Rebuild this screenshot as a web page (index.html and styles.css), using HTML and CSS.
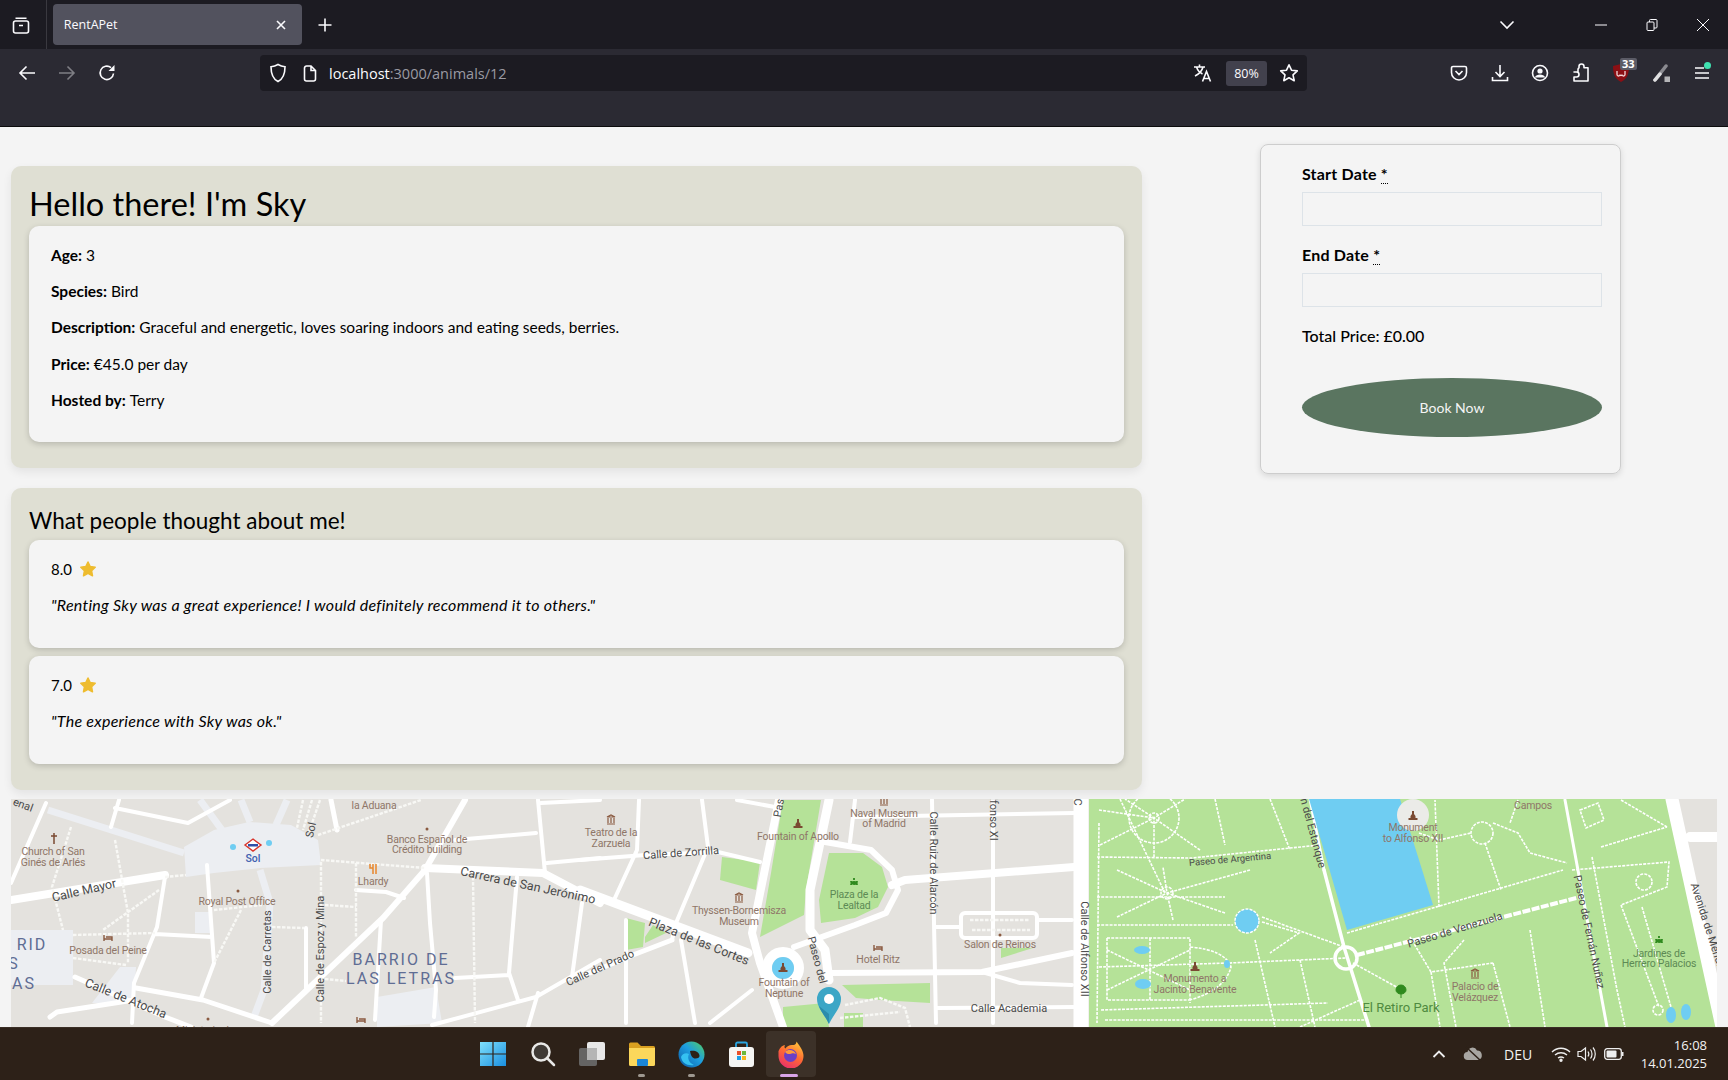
FILE: index.html
```html
<!DOCTYPE html>
<html lang="en">
<head>
    <meta charset="UTF-8">
    <title>RentAPet</title>
    <link rel="stylesheet" href="styles.css">
</head>
<body>

<!-- browser tabs -->
<div class="tab-row">
    <div class="tab-view">
        <svg width="20" height="20" viewBox="0 0 20 20" class="ico"><rect x="2.5" y="6" width="15" height="12" rx="2"/><path d="M4.5 3.2h11M8 10.5h4"/></svg>
    </div>
    <div class="tab">
        <span>RentAPet</span>
        <svg width="12" height="12" viewBox="0 0 12 12" class="ico"><path d="M2 2l8 8M10 2l-8 8"/></svg>
    </div>
    <svg width="16" height="16" viewBox="0 0 16 16" class="ico new-tab"><path d="M8 1.5v13M1.5 8h13"/></svg>
    <svg width="18" height="12" viewBox="0 0 18 12" class="ico tab-list"><path d="M2.5 2.5L9 9l6.5-6.5"/></svg>
    <div class="win-btn"><svg width="12" height="12" viewBox="0 0 12 12" class="ico thin"><path d="M0 6h12"/></svg></div>
    <div class="win-btn"><svg width="12" height="12" viewBox="0 0 12 12" class="ico thin"><rect x="1" y="3" width="7" height="8.5" rx="1"/><path d="M3.5 3V1.5a1 1 0 0 1 1-1h5.500a1 1 0 0 1 1 1V8a1 1 0 0 1-1 1H8"/></svg></div>
    <div class="win-btn"><svg width="14" height="14" viewBox="0 0 14 14" class="ico thin"><path d="M1 1l12 12M13 1L1 13"/></svg></div>
</div>

<!-- browser toolbar -->
<div class="toolbar">
    <div class="nav-btn"><svg width="18" height="18" viewBox="0 0 18 18" class="ico"><path d="M17 9H2M8.500 2.500L2 9l6.500 6.500"/></svg></div>
    <div class="nav-btn off"><svg width="18" height="18" viewBox="0 0 18 18" class="ico"><path d="M1 9h15M9.500 2.500L16 9l-6.500 6.500"/></svg></div>
    <div class="nav-btn"><svg width="18" height="18" viewBox="0 0 18 18" class="ico"><path d="M15.500 9.500A6.700 6.700 0 1 1 13 3.600"/><path class="solid" d="M16.500 1v6h-6z"/></svg></div>
    <div class="url-bar">
        <svg width="18" height="20" viewBox="0 0 18 20" class="ico shield"><path d="M9 1.500c2.500 1.500 4.500 2 7 2.200 0 7-1.500 12-7 14.800C3.500 15.700 2 10.700 2 3.700c2.500-.2 4.500-.7 7-2.200z"/></svg>
        <svg width="14" height="17" viewBox="0 0 14 17" class="ico page-ico"><path d="M1.500 3a2 2 0 0 1 2-2h4.500l4.500 4.500V14a2 2 0 0 1-2 2h-7a2 2 0 0 1-2-2zM8 1v4.500h4.500"/></svg>
        <span class="url-text">localhost<span class="url-dim">:3000/animals/12</span></span>
        <svg width="20" height="20" viewBox="0 0 20 20" class="ico translate"><path d="M1 4h11M6.500 1.500V4M10 4c-1 4-4 7-8 9M3.500 4c1 3 3 5.500 6 7"/><path d="M9.500 18.500l4-10 4 10M11 15.500h5"/></svg>
        <span class="zoom-level">80%</span>
        <svg width="20" height="20" viewBox="0 0 20 20" class="ico star-ico"><path d="M10 1.800l2.500 5.400 5.800.7-4.300 4 1.200 5.800-5.200-2.900-5.200 2.900 1.200-5.800-4.300-4 5.800-.7z" stroke-linejoin="round"/></svg>
    </div>
    <div class="tool-icons">
        <div class="tool"><svg width="18" height="18" viewBox="0 0 18 18" class="ico"><path d="M3 2.500h12a1.500 1.500 0 0 1 1.500 1.500v4.500a7.500 7.500 0 0 1-15 0V4A1.500 1.500 0 0 1 3 2.500zM5.500 7L9 10.500 12.500 7"/></svg></div>
        <div class="tool"><svg width="18" height="18" viewBox="0 0 18 18" class="ico"><path d="M9 1v11M4.500 8L9 12.500 13.500 8M1.500 13v3.500h15V13"/></svg></div>
        <div class="tool"><svg width="18" height="18" viewBox="0 0 18 18" class="ico"><circle cx="9" cy="9" r="7.500"/><circle class="solid" cx="9" cy="7" r="2.600"/><path class="solid" d="M3.800 13.500c1-2.300 3-3 5.200-3s4.200.7 5.200 3z"/></svg></div>
        <div class="tool"><svg width="18" height="20" viewBox="0 0 18 20" class="ico"><path d="M2 9h4V6.500a2 2 0 0 1 1-1.700V3.500a2.500 2.500 0 0 1 5 0v1.300H16V18H2v-4h2.500a2.500 2.500 0 0 0 0-5z" stroke-linejoin="round"/></svg></div>
        <div class="tool">
            <svg width="18" height="20" viewBox="0 0 18 20"><path d="M9 1l8 2c0 8-2 13-8 16C3 16 1 11 1 3z" fill="#8b0f14"/><path d="M5 8v3.500a1.500 1.500 0 0 0 3 0 1 1 0 0 0 2 0 1.500 1.500 0 0 0 3 0V8" fill="none" stroke="#f2d8d8" stroke-width="1.300"/></svg>
            <span class="ublock-count">33</span>
        </div>
        <div class="tool"><svg width="18" height="20" viewBox="0 0 18 20"><path d="M2 17L13 3" stroke="#8a8a90" stroke-width="3.500" stroke-linecap="round"/><path d="M2 17l5-6" stroke="#e0e0e2" stroke-width="3.500" stroke-linecap="round"/><rect x="11.500" y="13.500" width="5.500" height="5.500" fill="#b5b5b8"/></svg></div>
        <div class="tool">
            <svg width="16" height="14" viewBox="0 0 16 14" class="ico"><path d="M1 2h9M1 7h14M1 12h14"/></svg>
            <span class="update-dot"></span>
        </div>
    </div>
</div>

<!-- page content -->
<div class="page">
    <div class="top-row">
        <div class="left-col">
            <div class="panel">
                <h1>Hello there! I'm Sky</h1>
                <div class="inner info">
                    <p><b>Age:</b> 3</p>
                    <p><b>Species:</b> Bird</p>
                    <p><b>Description:</b> Graceful and energetic, loves soaring indoors and eating seeds, berries.</p>
                    <p><b>Price:</b> €45.0 per day</p>
                    <p><b>Hosted by:</b> Terry</p>
                </div>
            </div>
            <div class="panel reviews">
                <h2>What people thought about me!</h2>
                <div class="inner review">
                    <p class="rating">8.0 <svg width="18" height="18" viewBox="0 0 18 18" class="rate-star"><path d="M9 2l2.200 4.600 5 .7-3.600 3.500.9 5L9 13.400l-4.500 2.400.9-5L1.800 7.300l5-.7z"/></svg></p>
                    <p class="comment">"Renting Sky was a great experience! I would definitely recommend it to others."</p>
                </div>
                <div class="inner review">
                    <p class="rating">7.0 <svg width="18" height="18" viewBox="0 0 18 18" class="rate-star"><path d="M9 2l2.200 4.600 5 .7-3.600 3.500.9 5L9 13.400l-4.500 2.400.9-5L1.800 7.300l5-.7z"/></svg></p>
                    <p class="comment">"The experience with Sky was ok."</p>
                </div>
            </div>
        </div>
        <div class="booking">
            <label for="startDate">Start Date <abbr>*</abbr></label>
            <input id="startDate" type="text">
            <label for="endDate">End Date <abbr>*</abbr></label>
            <input id="endDate" type="text">
            <p class="total">Total Price: <span>£0.00</span></p>
            <button type="button">Book Now</button>
        </div>
    </div>

    <div class="map">
        <svg width="1706" height="228" viewBox="11 799 1706 228">
            <defs>
                <g id="mon"><path d="M-1 -5h2v3l1.500 2v2h2v2h-9V2h2V0L-1 -2z" fill="#7a4a32"/></g>
                <g id="bed"><path d="M-4 -3v6M-4 1H4v2M-2 -1h6v2" fill="none" stroke="#8a5a40" stroke-width="1.400"/></g>
                <g id="mus"><path d="M-4 -3L0 -5l4 2zM-4 4h8M-3 -2v5M0 -2v5M3 -2v5" fill="none" stroke="#8a5a40" stroke-width="1.200"/></g>
                <g id="gdn"><path d="M-3 -2a3 3 0 0 0 6 0M-3 2a3 3 0 0 1 6 0M0 -5v2" fill="none" stroke="#2f8a1e" stroke-width="1.800"/></g>
            </defs>

            <rect x="11" y="799" width="1706" height="228" fill="#e4e2de"/>

            <!-- pale squares and parks -->
            <g fill="#eceef2">
                <path d="M184 847L214 830 249 822 291 825 318 840 321 865 260 868 214 873 186 877z"/>
                <rect x="11" y="930" width="62" height="55"/>
                <path d="M195 912h17v21h-17zM120 967h16l-2 36H92zM377 997l59-10 6 36-65 4z"/>
            </g>
            <g fill="#b5e298">
                <path d="M783 800H821L806 890 804 915 760 937 771 873z"/>
                <path d="M829 853H863L882 867 888 887 878 907 855 918 821 923 819 900z"/>
                <path d="M722 857L760 862 756 890 720 880z"/>
                <path d="M626 918L645 923 643 947 626 950zM645 937L653 925 666 933 645 943z"/>
                <path d="M842 985L930 983V1003L880 1000 856 998zM783 1007L825 1003 829 1027H783zM844 1013H863V1027H844z"/>
                <path d="M1001 948H1033L1001 958z"/>
                <path d="M1089 799H1668L1716 1027H1089z"/>
            </g>

            <!-- pale wide streets -->
            <g fill="none" stroke="#eceef2" stroke-width="7" stroke-linejoin="round">
                <path d="M48 810L184 853M260 870L270 903 264 990 254 1017"/>
                <path d="M200 800L222 830M241 800L250 822M287 800L276 825"/>
            </g>

            <!-- streets -->
            <g fill="none" stroke="#fff" stroke-width="5" stroke-linejoin="round" stroke-linecap="round">
                <path d="M11 900L165 875" stroke-width="8"/>
                <path d="M46 803L11 883M119 800L111 827M115 808L188 823 230 800" stroke-width="4"/>
                <path d="M331 800L337 830"/>
                <path d="M465 800L425 870 383 918 272 1023" stroke-width="6"/>
                <path d="M425 868L543 873 600 903" stroke-width="8"/>
                <path d="M580 890L748 953" stroke-width="9"/>
                <path d="M207 865L214 963 201 998M165 877L157 927 134 983 132 1023M155 934L212 937" stroke-width="4"/>
                <path d="M136 988L203 1000 272 1023M75 977L165 1017 191 1027M50 1017L57 1012 134 1000" stroke-width="5"/>
                <path d="M356 890L386 892 404 898M306 928L306 990" stroke-width="4"/>
                <path d="M427 873L430 923 436 990 434 1017M381 920L375 1020" stroke-width="4"/>
                <path d="M517 877L509 973 518 1000M455 978L509 975M600 960L536 997 432 1025" stroke-width="4"/>
                <path d="M580 977L633 955 672 940" stroke-width="5"/>
                <path d="M538 800L545 873M541 803L600 800M547 863L600 858M455 840L536 833M582 903L572 977M538 993L528 1027" stroke-width="4"/>
                <path d="M779 800L752 933 760 963 783 1027" stroke-width="8"/>
                <path d="M829 800L810 890 810 930 825 950 829 980" stroke-width="9"/>
                <path d="M825 842L871 850 892 870 898 890 886 913 855 925 794 947" stroke-width="6"/>
                <path d="M892 885L905 880 1074 867" stroke-width="8"/>
                <path d="M855 800L850 842M854 817L1074 813M932 800L934 923 936 1023M993 800V1023" stroke-width="4"/>
                <path d="M1081 799V1027" stroke-width="15"/>
                <path d="M829 973L982 972 1072 953" stroke-width="6"/>
                <path d="M982 972L1020 983 1072 985M936 1008L1074 1007M936 927H959M1037 920H1072" stroke-width="4"/>
                <rect x="961" y="913" width="76" height="25" rx="4" stroke-width="4"/>
                <path d="M580 860L645 855 718 852 760 862M639 800L637 850 614 900M702 800L708 847 676 923 672 940M737 800L775 807" stroke-width="4"/>
                <path d="M626 920V1023M681 940L695 1023M752 990L710 1023" stroke-width="4"/>
                <circle cx="783" cy="968" r="16" stroke-width="10"/>
                <path d="M1672 799L1722 1027" stroke-width="13"/>
                <path d="M1690 837H1718" stroke-width="10"/>
                <path d="M1324 870L1344 947 1369 1027" stroke-width="3.500"/>
                <path d="M1310 799L1324 870" stroke-width="3"/>
                <path d="M1565 800L1607 1027" stroke-width="3"/>
                <circle cx="1346" cy="958" r="11" stroke-width="3.500"/>
            </g>
            <path d="M1357 955L1580 897" fill="none" stroke="#fff" stroke-width="4" stroke-dasharray="8 1.500"/>

            <!-- footpaths -->
            <g fill="none" stroke="#f8f8f5" stroke-width="2.400" stroke-dasharray="3.500 1.500">
                <path d="M71 827L52 887 63 930M115 840L128 913 128 963M159 890L103 930M73 935L155 933M73 958L126 965"/>
                <path d="M165 877L186 875M318 835L421 800M321 860L425 868M321 862V1023M356 863V937M325 905L356 907M214 910L262 905M241 910L214 963M272 927L304 928M325 979L346 981M473 877L475 1023"/>
                <path d="M303 800L297 828M312 800L303 830M320 800L309 832"/>
                <path d="M845 1005L880 998 905 1008 910 1027M840 1018L900 1012M970 920H1030M972 930H1030"/>
            </g>
            <g fill="none" stroke="#fff" stroke-width="1.600" stroke-dasharray="3 1.200">
                <circle cx="1154" cy="818" r="25"/><circle cx="1154" cy="818" r="5"/>
                <path d="M1099 810L1154 818 1125 799M1100 845L1154 818 1185 799M1200 850L1154 818V857M1120 799L1165 893M1215 799L1225 845M1270 799L1290 850"/>
                <path d="M1097 857L1192 858 1320 845M1099 823L1097 1023"/>
                <circle cx="1167" cy="893" r="6"/>
                <path d="M1117 870L1167 893 1225 913M1117 917L1167 893 1250 870M1097 897H1225M1173 920L1167 893 1163 867M1097 925H1233"/>
                <path d="M1262 917L1344 947M1262 922L1299 933 1270 953M1107 938H1190V1003M1107 938V1000H1190M1107 950L1190 990M1107 990L1190 950M1150 938V1000"/>
                <path d="M1099 967L1229 963 1346 958M1101 1010L1328 1003M1190 947Q1225 950 1231 967 1225 990 1190 1000M1255 940L1275 1027M1300 960L1315 1027"/>
                <path d="M1353 963L1402 990M1410 937L1431 972 1493 963M1464 940L1444 963 1456 1027M1347 933L1563 870M1439 907L1435 800"/>
                <path d="M1419 833L1439 840 1471 833M1493 823L1518 833 1530 853 1567 863M1485 843L1501 890M1518 800L1510 823"/>
                <circle cx="1482" cy="833" r="11"/>
                <path d="M1572 870L1669 862 1667 887 1621 905M1601 847L1667 827M1621 905L1659 1007M1642 907L1671 1007M1592 857L1617 990 1625 1027M1621 800L1667 827"/>
                <path d="M1580 810L1598 803 1604 820 1586 828z"/>
                <circle cx="1644" cy="882" r="8"/><circle cx="1658" cy="1010" r="5"/>
                <path d="M1431 972L1440 1027M1493 963L1510 1027M1530 930L1545 1027M1360 1000L1300 1027M1105 1020H1369"/>
            </g>

            <!-- water -->
            <g fill="#6fcdf2">
                <path d="M1309 799H1400L1433 905 1347 930z"/>
                <circle cx="1247" cy="921" r="12" stroke="#fff" stroke-width="1.400" stroke-dasharray="3 1.200"/>
                <ellipse cx="1142" cy="950" rx="8" ry="4"/><ellipse cx="1143" cy="984" rx="8" ry="5"/>
                <ellipse cx="1227" cy="964" rx="3" ry="4"/>
                <ellipse cx="1671" cy="1015" rx="5" ry="8"/><ellipse cx="1686" cy="1012" rx="5" ry="8"/>
                <ellipse cx="783" cy="968" rx="11" ry="11"/>
                <circle cx="233" cy="847" r="3"/><circle cx="269" cy="843" r="3"/>
            </g>
            <circle cx="1413" cy="815" r="16" fill="#ebebe8"/>

            <!-- poi icons -->
            <use href="#mon" x="798" y="824"/>
            <use href="#mon" x="783" y="968"/>
            <use href="#mon" x="1413" y="816"/>
            <use href="#mon" x="1195" y="967"/>
            <use href="#bed" x="108" y="938"/>
            <use href="#bed" x="878" y="948"/>
            <use href="#bed" x="361" y="1020"/>
            <use href="#mus" x="611" y="820"/>
            <use href="#mus" x="739" y="898"/>
            <use href="#mus" x="884" y="801"/>
            <use href="#mus" x="1475" y="974"/>
            <use href="#gdn" x="854" y="883"/>
            <use href="#gdn" x="1659" y="941"/>
            <path d="M54 833v11M51 836h6" fill="none" stroke="#7a4a32" stroke-width="1.500"/>
            <path d="M373 864v10M370 864v4h3M376 864v10" fill="none" stroke="#e8872c" stroke-width="1.500"/>
            <path d="M1401 998v-5M1396 990a5 5 0 1 1 10 0 5 4 0 0 1-10 0z" fill="#2f8a1e" stroke="#2f8a1e"/>
            <path d="M253 839l8 6-8 6-8-6z" fill="#fff" stroke="#d8342c" stroke-width="1.400"/>
            <rect x="248" y="844" width="10" height="2.500" fill="#2f4fa8"/>
            <g fill="#8a5a40"><circle cx="427" cy="829" r="1.500"/><circle cx="238" cy="891" r="1.500"/><circle cx="1000" cy="935" r="1.500"/><circle cx="208" cy="1019" r="1.500"/></g>

            <!-- labels -->
            <g class="poi">
                <text x="53" y="851">Church of San</text><text x="53" y="862">Ginés de Arlés</text>
                <text x="374" y="805">la Aduana</text>
                <text x="427" y="839">Banco Español de</text><text x="427" y="849">Crédito building</text>
                <text x="373" y="881">Lhardy</text>
                <text x="237" y="901">Royal Post Office</text>
                <text x="108" y="950">Posada del Peine</text>
                <text x="611" y="832">Teatro de la</text><text x="611" y="843">Zarzuela</text>
                <text x="798" y="836">Fountain of Apollo</text>
                <text x="884" y="813">Naval Museum</text><text x="884" y="823">of Madrid</text>
                <text x="739" y="910">Thyssen-Bornemisza</text><text x="739" y="921">Museum</text>
                <text x="878" y="959">Hotel Ritz</text>
                <text x="1000" y="944">Salon de Reinos</text>
                <text x="784" y="982">Fountain of</text><text x="784" y="993">Neptune</text>
                <text x="1413" y="827">Monument</text><text x="1413" y="838">to Alfonso XII</text>
                <text x="1533" y="805">Campos</text>
                <text x="1475" y="986">Palacio de</text><text x="1475" y="997">Velázquez</text>
                <text x="1195" y="978">Monumento a</text><text x="1195" y="989">Jacinto Benavente</text>
                <text x="205" y="1030">Ministerio de</text>
            </g>
            <g class="poi green">
                <text x="854" y="894">Plaza de la</text><text x="854" y="905">Lealtad</text>
                <text x="1659" y="953">Jardines de</text><text x="1659" y="963">Herrero Palacios</text>
                <text class="big" x="1401" y="1007">El Retiro Park</text>
            </g>
            <text class="metro" x="253" y="858">Sol</text>
            <g class="area">
                <text x="401" y="959">BARRIO DE</text><text x="401" y="978">LAS LETRAS</text>
                <text x="32" y="944">RID</text><text x="14" y="963">S</text><text x="24" y="983">AS</text>
            </g>
            <g class="street">
                <text transform="translate(23 805) rotate(20)">enal</text>
                <text transform="translate(311 830) rotate(-78)">Sol</text>
                <text class="big" transform="translate(84 890) rotate(-13)">Calle Mayor</text>
                <text class="big" transform="translate(528 885) rotate(12)">Carrera de San Jerónimo</text>
                <text transform="translate(267 952) rotate(-90)">Calle de Carretas</text>
                <text transform="translate(320 949) rotate(-90)">Calle de Espoz y Mina</text>
                <text class="big" transform="translate(126 998) rotate(22)">Calle de Atocha</text>
                <text transform="translate(600 968) rotate(-24)">Calle del Prado</text>
                <text transform="translate(681 853) rotate(-4)">Calle de Zorrilla</text>
                <text transform="translate(779 808) rotate(-80)">Pas</text>
                <text transform="translate(933 863) rotate(90)">Calle Ruiz de Alarcón</text>
                <text transform="translate(993 819) rotate(90)">lfonso XI</text>
                <text transform="translate(1077 802) rotate(90)">C</text>
                <text class="big" transform="translate(699 941) rotate(22)">Plaza de las Cortes</text>
                <text transform="translate(817 960) rotate(75)">Paseo del</text>
                <text transform="translate(1009 1008)">Calle Academia</text>
                <text transform="translate(1084 949) rotate(90)">Calle de Alfonso XII</text>
                <text transform="translate(1313 833) rotate(75)">n del Estanque</text>
                <text class="small" transform="translate(1230 859) rotate(-5)">Paseo de Argentina</text>
                <text transform="translate(1455 930) rotate(-17)">Paseo de Venezuela</text>
                <text transform="translate(1589 932) rotate(78)">Paseo de Fernán Nuñez</text>
                <text transform="translate(1708 927) rotate(72)">Avenida de Mendiz</text>
            </g>

            <!-- marker -->
            <path d="M829 1024C825 1015 817 1008 817 999a12 12 0 0 1 24 0c0 9-8 16-12 25z" fill="#3ba6c6"/>
            <circle cx="829" cy="999" r="5" fill="#fff"/>
            <path d="M829 1024C826 1017 821 1012 819 1006L829 1014z" fill="#2b8cab"/>
        </svg>
    </div>
</div>

<!-- windows taskbar -->
<div class="taskbar">
    <div class="task-apps">
        <div class="app"><svg width="26" height="26" viewBox="0 0 26 26"><defs><linearGradient id="win" x1="0" y1="0" x2="1" y2="1"><stop offset="0" stop-color="#7fe0fb"/><stop offset="1" stop-color="#1a8fe0"/></linearGradient></defs><path fill="url(#win)" d="M0 1h12.400v11.400H0zM13.600 1H26v11.400H13.600zM0 13.600h12.400V25H0zM13.600 13.600H26V25H13.600z"/></svg></div>
        <div class="app"><svg width="26" height="26" viewBox="0 0 26 26" fill="none"><circle cx="11" cy="11" r="8.500" stroke="#e8e8e6" stroke-width="2.500" fill="#3f3a35"/><path d="M17 17l7 7" stroke="#e8e8e6" stroke-width="2.500" stroke-linecap="round"/></svg></div>
        <div class="app"><svg width="28" height="26" viewBox="0 0 28 26"><rect x="9" y="1" width="18" height="18" rx="2" fill="#e8e8e8"/><rect x="1" y="7" width="18" height="18" rx="2" fill="#6a6a6a" opacity=".92"/><rect x="9" y="7" width="10" height="12" fill="#b5b5b5"/></svg></div>
        <div class="app"><svg width="28" height="26" viewBox="0 0 28 26"><path d="M1 3a1.500 1.500 0 0 1 1.500-1.500h7L13 5h12.500A1.500 1.500 0 0 1 27 6.500V9H1z" fill="#d9a020"/><path d="M1 7h26v16.500a1.500 1.500 0 0 1-1.500 1.500h-23A1.500 1.500 0 0 1 1 23.500z" fill="#fbd75b"/><rect x="9" y="18" width="11" height="7" rx="1" fill="#1a86d8"/></svg><span class="app-dot"></span></div>
        <div class="app"><svg width="27" height="27" viewBox="0 0 27 27"><defs><linearGradient id="edge" x1="0" y1="1" x2="1" y2="0"><stop offset="0" stop-color="#0c59a4"/><stop offset=".55" stop-color="#1d9ee0"/><stop offset="1" stop-color="#56d25c"/></linearGradient></defs><circle cx="13.500" cy="13.500" r="13" fill="url(#edge)"/><path d="M12 10c5-1 9 1 9.500 4.500.3 2-1.500 3-4 3-3 0-4.500-2-5.500-7.500z" fill="#2d2118"/><path d="M11 13c-2 4 0 9 5 11-7 1-12-2-13-8 1-3 5-5 8-3z" fill="#35c1f1"/></svg><span class="app-dot"></span></div>
        <div class="app"><svg width="27" height="27" viewBox="0 0 27 27"><path d="M8 7V3a1.500 1.500 0 0 1 1.500-1.500h8A1.500 1.500 0 0 1 19 3v4" fill="none" stroke="#2aa5e0" stroke-width="1.800"/><rect x="1" y="6" width="25" height="20" rx="3" fill="#f5f5f3"/><rect x="9" y="10" width="4" height="4" fill="#e8502a"/><rect x="14" y="10" width="4" height="4" fill="#6cb83a"/><rect x="9" y="15" width="4" height="4" fill="#1a9fe8"/><rect x="14" y="15" width="4" height="4" fill="#f5b81e"/></svg></div>
        <div class="app active"><svg width="27" height="27" viewBox="0 0 27 27"><defs><linearGradient id="fox" x1="0.800" y1="0" x2="0.300" y2="1"><stop offset="0" stop-color="#ffc83a"/><stop offset=".5" stop-color="#ff6a32"/><stop offset="1" stop-color="#e8306a"/></linearGradient></defs><path d="M1.500 10C3 6 6 4 8 4c-1 2-.5 3 .5 3.500C10 5 13 3.500 16 4c2 .3 3.500-1.500 3.500-3.500C21 3 23 5 24.500 8c1.500 3 2 5 2 7a12.500 12.500 0 0 1-25 0c0-2 0-3.500 0-5z" fill="url(#fox)"/><circle cx="13.500" cy="14.500" r="6.500" fill="#6b3fc4"/><path d="M8 11c3-3 9-2.500 11 2-3-1.500-4-.5-6 0-2 .3-4-.5-5-2z" fill="#ff9a3c"/></svg><span class="app-dot wide"></span></div>
    </div>
    <div class="tray">
        <svg class="tray-chev" width="14" height="10" viewBox="0 0 14 10" fill="none"><path d="M1.500 8L7 2.500 12.500 8" stroke="#eee" stroke-width="1.800"/></svg>
        <svg class="tray-cloud" width="20" height="16" viewBox="0 0 20 16"><path d="M5 14a4 4 0 0 1-.5-8A5 5 0 0 1 14 4.500 4.800 4.800 0 0 1 15 14z" fill="#a8a6a2"/><path d="M3 1l15 14" stroke="#2d2118" stroke-width="1.500"/></svg>
        <span class="tray-lang">DEU</span>
        <svg class="tray-wifi" width="20" height="16" viewBox="0 0 20 16" fill="none" stroke="#eee" stroke-width="1.400"><path d="M1 6c5-5 13-5 18 0M4 9c3.500-3 8.500-3 12 0M7 12c1.800-1.300 4.200-1.300 6 0"/><circle cx="10" cy="14.300" r="1" fill="#eee"/></svg>
        <svg class="tray-vol" width="20" height="16" viewBox="0 0 20 16" fill="none" stroke="#eee" stroke-width="1.200"><path d="M1 5.500h3L8.500 2v12L4 10.500H1zM11 5.500c1 1.500 1 3.500 0 5M13.500 3.500c2 2.500 2 6.500 0 9M16 1.500c3 3.500 3 9.500 0 13"/></svg>
        <svg class="tray-batt" width="20" height="12" viewBox="0 0 20 12"><rect x=".7" y=".7" width="16.600" height="10.600" rx="2.500" fill="none" stroke="#eee" stroke-width="1.300"/><rect x="2.500" y="2.500" width="10" height="7" rx="1" fill="#eee"/><rect x="18" y="4" width="1.500" height="4" fill="#eee"/></svg>
        <div class="clock"><div>16:08</div><div>14.01.2025</div></div>
    </div>
</div>

</body>
</html>
```

FILE: styles.css
```css
body {
    margin: 0;
    height: 1080px;
    overflow: hidden;
    font-family: Lato, sans-serif;
    color: #000;
    background-color: #f4f4f4;
}
.ico {
    fill: none;
    stroke: #fbfbfe;
    stroke-width: 1.6;
    display: block;
    flex: none;
}
.ico.thin {
    stroke-width: 1;
}
.ico .solid {
    fill: #fbfbfe;
    stroke: none;
}

/* tabs */
.tab-row {
    height: 49px;
    display: flex;
    align-items: center;
    background-color: #1c1b22;
}
.tab-view {
    width: 47px;
    height: 49px;
    border-right: 1px solid #3a3940;
    display: flex;
    align-items: center;
    justify-content: center;
    padding-right: 3px;
    box-sizing: border-box;
}
.tab {
    width: 250px;
    height: 41px;
    margin-left: 6px;
    padding: 0 15px 0 11px;
    box-sizing: border-box;
    background-color: #52525e;
    border-radius: 4px;
    display: flex;
    align-items: center;
    justify-content: space-between;
    color: #fbfbfe;
    font: 12.5px "Open Sans", sans-serif;
}
.new-tab {
    margin-left: 15px;
}
.tab-list {
    margin-left: 1165px;
    margin-right: 60px;
}
.win-btn {
    width: 51px;
    display: flex;
    justify-content: center;
}

/* toolbar */
.toolbar {
    height: 78px;
    box-sizing: border-box;
    padding: 6px 0 0 7px;
    display: flex;
    align-items: flex-start;
    background-color: #2b2a33;
    border-bottom: 1px solid #0c0c0d;
}
.nav-btn {
    width: 40px;
    height: 36px;
    display: flex;
    align-items: center;
    justify-content: center;
}
.nav-btn.off {
    opacity: 0.4;
}
.url-bar {
    width: 1047px;
    height: 36px;
    margin-left: 133px;
    padding-left: 9px;
    box-sizing: border-box;
    display: flex;
    align-items: center;
    background-color: #1c1b22;
    border-radius: 4px;
}
.page-ico {
    margin-left: 16px;
}
.url-text {
    margin-left: 12px;
    font: 14.5px "Open Sans", sans-serif;
    color: #fbfbfe;
}
.url-dim {
    color: #9a9aa2;
}
.translate {
    margin-left: auto;
}
.zoom-level {
    width: 41px;
    height: 25px;
    margin-left: 13px;
    border-radius: 3px;
    background-color: #42414d;
    color: #fbfbfe;
    font: 12.5px/25px "Open Sans", sans-serif;
    text-align: center;
}
.star-ico {
    margin: 0 8px 0 12px;
}
.tool-icons {
    display: flex;
    margin-left: 132px;
}
.tool {
    position: relative;
    width: 40.5px;
    height: 36px;
    display: flex;
    align-items: center;
    justify-content: center;
}
.ublock-count {
    position: absolute;
    left: 19px;
    top: 3px;
    padding: 0 2px;
    background-color: #5b5b66;
    border-radius: 2px;
    color: #fff;
    font: bold 11px/12px "Open Sans", sans-serif;
}
.update-dot {
    position: absolute;
    left: 22px;
    top: 7px;
    width: 7px;
    height: 7px;
    border-radius: 50%;
    background-color: #3fe1b0;
}

/* page */
.page {
    height: 900px;
    overflow: hidden;
}
.top-row {
    display: flex;
    align-items: flex-start;
    height: 672px;
}
.left-col {
    width: 1131px;
    margin: 39px 0 0 11px;
}
.panel {
    height: 302px;
    box-sizing: border-box;
    padding: 0 18px;
    background-color: #dfdfd3;
    border-radius: 10px;
    box-shadow: 0 4px 10px rgba(0, 0, 0, 0.07);
    overflow: hidden;
}
.panel.reviews {
    height: 302px;
    margin-top: 20px;
}
h1 {
    margin: 15px 0 0;
    font-size: 32.5px;
    line-height: 45px;
    font-weight: 400;
}
h2 {
    margin: 14px 0 0;
    font-size: 22.5px;
    line-height: 38px;
    font-weight: 400;
}
.inner {
    background-color: #f4f4f4;
    border-radius: 10px;
    box-shadow: 0 2px 6px rgba(0, 0, 0, 0.18);
    padding: 11px 22px;
    box-sizing: border-box;
    font-size: 15.5px;
}
.info {
    height: 216px;
}
.inner p {
    margin: 0;
    height: 36.2px;
    line-height: 36.2px;
    display: flex;
    align-items: center;
    gap: 4px;
}
.inner p b {
    font-weight: 700;
}
.inner .comment {
    font-size: 16px;
    font-style: italic;
    letter-spacing: 0.26px;
}
.review {
    height: 108px;
    margin-bottom: 8px;
}
.inner .rating {
    gap: 7px;
    font-size: 15px;
}
.rate-star {
    fill: #eebc2f;
    stroke: #eebc2f;
    stroke-width: 1.500;
    stroke-linejoin: round;
}

/* booking card */
.booking {
    width: 361px;
    height: 330px;
    margin: 17px 0 0 118px;
    padding: 17px 18px 0 41px;
    box-sizing: border-box;
    flex: none;
    border: 1px solid #cdcdcd;
    border-radius: 8px;
    box-shadow: 0 2px 6px rgba(0, 0, 0, 0.12);
    font-size: 16px;
}
.booking label {
    display: block;
    height: 30px;
    line-height: 24px;
    font-weight: 700;
    letter-spacing: 0.2px;
}
.booking abbr {
    border-bottom: 1px dotted #000;
}
.booking input {
    display: block;
    width: 100%;
    height: 34px;
    box-sizing: border-box;
    margin-bottom: 17px;
    background: none;
    border: 1px solid #dde3e8;
}
.total {
    margin: 7px 0 0;
    line-height: 24px;
    font-weight: 500;
}
.booking button {
    display: block;
    width: 100%;
    height: 59px;
    margin-top: 30px;
    background-color: #5a7560;
    border: none;
    border-radius: 50%;
    color: #f4f4f4;
    font: 14px Lato, sans-serif;
}

/* map */
.map {
    margin-left: 11px;
    height: 228px;
}
.map svg {
    display: block;
}
.map text {
    font-family: Roboto, sans-serif;
    text-anchor: middle;
    dominant-baseline: central;
}
.poi text {
    font-size: 10.5px;
    letter-spacing: -0.2px;
    fill: #8f7668;
}
.poi.green text {
    fill: #5d8a55;
}
.poi.green .big {
    font-size: 13px;
    letter-spacing: 0;
    fill: #4f8a3f;
}
.metro {
    font-size: 10.5px;
    font-weight: 500;
    fill: #3f5fb0;
}
.area text {
    font-size: 16px;
    letter-spacing: 2px;
    fill: #5f6d94;
}
.street text {
    font-size: 11px;
    fill: #4a4a4a;
}
.street .big {
    font-size: 12.5px;
}
.street .small {
    font-size: 9.5px;
}

/* taskbar */
.taskbar {
    height: 53px;
    display: flex;
    align-items: center;
    background-color: #2d2118;
    border-top: 1px solid #3a2e25;
    box-sizing: border-box;
    color: #f2f2f2;
    font-family: "Open Sans", sans-serif;
}
.task-apps {
    display: flex;
    margin-left: 468px;
}
.app {
    position: relative;
    width: 49.700px;
    height: 46px;
    display: flex;
    align-items: center;
    justify-content: center;
    border-radius: 4px;
}
.app.active {
    background-color: #3c3128;
}
.app-dot {
    position: absolute;
    bottom: 0;
    left: 21px;
    width: 7px;
    height: 3px;
    border-radius: 2px;
    background-color: #9e9890;
}
.app-dot.wide {
    left: 14px;
    width: 18px;
    background-color: #d9a5e8;
}
.tray {
    margin-left: auto;
    padding-right: 21px;
    display: flex;
    align-items: center;
}
.tray-chev {
    margin-right: 17px;
}
.tray-cloud {
    margin-right: 21px;
}
.tray-lang {
    width: 47px;
    font-size: 14px;
}
.tray-wifi {
    margin-right: 6px;
}
.tray-vol {
    margin-right: 7px;
}
.tray-batt {
    margin-right: 7px;
}
.clock {
    width: 76px;
    text-align: right;
    font-size: 13px;
    line-height: 18px;
}
```
